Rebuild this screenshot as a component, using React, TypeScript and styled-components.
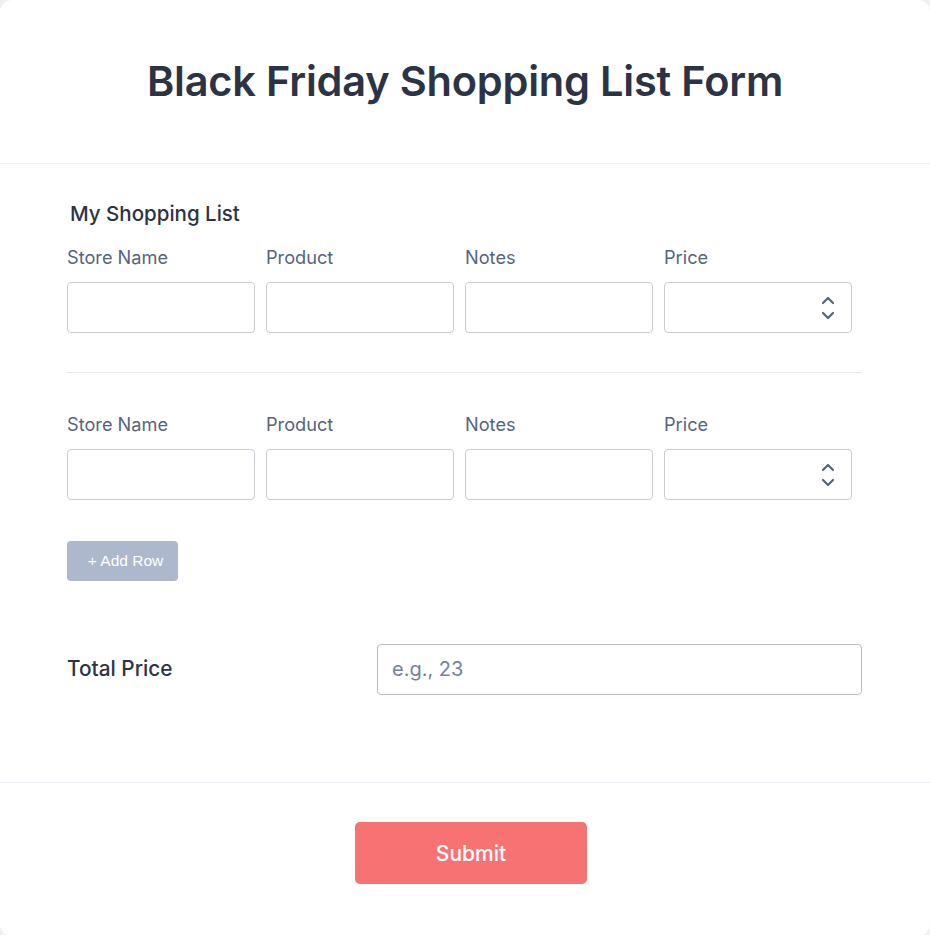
import React from "react";
import styled, { createGlobalStyle } from "styled-components";

const Global = createGlobalStyle`
  html, body { margin: 0; padding: 0; background: #eef0f4; }
  body { font-family: Inter, "Noto Sans", sans-serif; }
  * { box-sizing: border-box; }
`;

const Card = styled.div`
  width: 930px;
  min-height: 935px;
  background: #fff;
  border-radius: 12px;
  display: flex;
  flex-direction: column;
`;

const Header = styled.header`
  height: 164px;
  border-bottom: 1px solid #f1f2f8;
  display: flex;
  align-items: center;
  justify-content: center;
  padding-bottom: 2px;
`;

const Title = styled.h1`
  margin: 0;
  font-family: Inter, sans-serif;
  font-size: 41.5px;
  font-weight: 600;
  color: #2c3345;
  letter-spacing: -0.2px;
`;

const Body = styled.main`
  padding: 38px 68px 0 67px;
  flex: 1;
  display: flex;
  flex-direction: column;
`;

const SectionTitle = styled.div`
  font-size: 20.5px;
  line-height: 24px;
  font-weight: 450;
  color: #2c3345;
  padding-left: 3px;
  margin-bottom: 21px;
`;

const Row = styled.div`
  display: grid;
  grid-template-columns: repeat(4, 188px);
  column-gap: 11px;
`;

const Field = styled.div`
  display: flex;
  flex-direction: column;
`;

const Label = styled.label`
  font-size: 18.2px;
  line-height: 20px;
  color: #57647e;
  margin-bottom: 15px;
`;

const Input = styled.div`
  height: 51px;
  border: 1px solid #c9ccd3;
  border-radius: 4px;
  background: #fff;
  display: flex;
  align-items: center;
  justify-content: flex-end;
  padding-right: 16px;
`;

const Divider = styled.hr`
  border: none;
  border-top: 1px solid #e6e8ee;
  margin: 39px 0 41px;
  width: 100%;
`;

const AddRow = styled.button`
  align-self: flex-start;
  margin-top: 41px;
  width: 111px;
  height: 40px;
  border: none;
  border-radius: 4px;
  background: #adb8cc;
  color: #fff;
  font-family: "Liberation Sans", Arial, sans-serif;
  font-size: 15.5px;
  padding: 0 0 0 6px;
`;

const TotalRow = styled.div`
  margin-top: 63px;
  display: grid;
  grid-template-columns: 310px 1fr;
  align-items: center;
`;

const TotalLabel = styled.div`
  font-size: 20.8px;
  font-weight: 500;
  color: #2c3345;
  padding-bottom: 2px;
`;

const TotalInput = styled.div`
  height: 51px;
  border: 1px solid #b8bdc9;
  border-radius: 4px;
  display: flex;
  align-items: center;
  padding-left: 14px;
  font-size: 20px;
  color: #76829a;
  padding-bottom: 2px;
`;

const Footer = styled.footer`
  margin-top: 87px;
  border-top: 1px solid #f1f2f8;
  padding: 39px 0 52px;
  display: flex;
  justify-content: center;
`;

const Submit = styled.button`
  width: 232px;
  height: 62px;
  border: none;
  border-radius: 5px;
  background: #f77373;
  color: #fff;
  font-family: Inter, sans-serif;
  font-size: 21px;
  font-weight: 500;
  margin-left: 12px;
`;

const Stepper = () => (
  <svg width="14" height="30" viewBox="0 0 14 30" fill="none" stroke="#57647e" strokeWidth="2.2" strokeLinecap="round" strokeLinejoin="round">
    <path d="M2 10 L7 5 L12 10" />
    <path d="M2 20 L7 25 L12 20" />
  </svg>
);

const labels = ["Store Name", "Product", "Notes", "Price"];

const ItemRow = () => (
  <Row>
    {labels.map((l) => (
      <Field key={l}>
        <Label>{l}</Label>
        <Input>{l === "Price" && <Stepper />}</Input>
      </Field>
    ))}
  </Row>
);

export default function App() {
  return (
    <>
      <Global />
      <Card>
        <Header>
          <Title>Black Friday Shopping List Form</Title>
        </Header>
        <Body>
          <SectionTitle>My Shopping List</SectionTitle>
          <ItemRow />
          <Divider />
          <ItemRow />
          <AddRow>+ Add Row</AddRow>
          <TotalRow>
            <TotalLabel>Total Price</TotalLabel>
            <TotalInput>e.g., 23</TotalInput>
          </TotalRow>
        </Body>
        <Footer>
          <Submit>Submit</Submit>
        </Footer>
      </Card>
    </>
  );
}
